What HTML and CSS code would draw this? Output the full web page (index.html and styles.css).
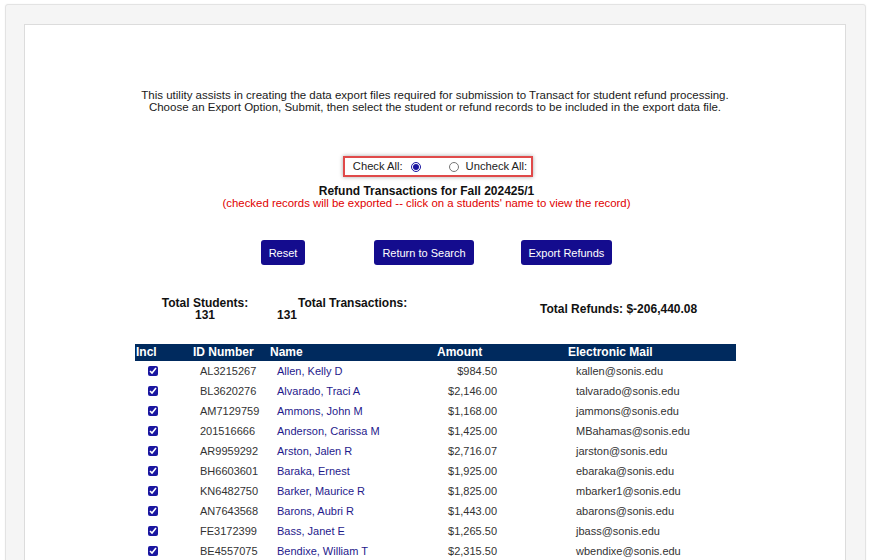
FILE: index.html
```html
<!DOCTYPE html>
<html>
<head>
<meta charset="utf-8">
<link rel="stylesheet" href="styles.css">
</head>
<body>
<div class="outer">
  <div class="inner">
    <p class="intro">This utility assists in creating the data export files required for submission to Transact for student refund processing.<br>Choose an Export Option, Submit, then select the student or refund records to be included in the export data file.</p>

    <div class="checkwrap">
      <div class="checkbox-panel">
        <label class="lbl">Check All:</label>
        <input type="radio" name="chk" class="radio r1" checked>
        <input type="radio" name="chk" class="radio r2">
        <label class="lbl lbl2">Uncheck All:</label>
      </div>
    </div>

    <div class="heading">
      <div class="title">Refund Transactions for Fall 202425/1</div>
      <div class="subtitle">(checked records will be exported -- click on a students' name to view the record)</div>
    </div>

    <div class="buttons">
      <button class="btn b-reset">Reset</button>
      <button class="btn b-return">Return to Search</button>
      <button class="btn b-export">Export Refunds</button>
    </div>

    <div class="totals">
      <div class="t1">Total Students:<br>131</div>
      <div class="t2"><span class="t2lbl">Total Transactions:</span><br>131</div>
      <div class="t3">Total Refunds: $-206,440.08</div>
    </div>

    <table class="grid">
      <colgroup>
        <col class="c-incl"><col class="c-id"><col class="c-name"><col class="c-amt"><col class="c-mail">
      </colgroup>
      <thead>
        <tr><th class="h-incl">Incl</th><th class="h-id">ID Number</th><th class="h-name">Name</th><th class="h-amt">Amount</th><th class="h-mail">Electronic Mail</th></tr>
      </thead>
      <tbody>
        <tr><td class="d-incl"><input type="checkbox" class="cb" checked></td><td class="d-id">AL3215267</td><td class="d-name"><a href="#">Allen, Kelly D</a></td><td class="d-amt">$984.50</td><td class="d-mail">kallen@sonis.edu</td></tr>
        <tr><td class="d-incl"><input type="checkbox" class="cb" checked></td><td class="d-id">BL3620276</td><td class="d-name"><a href="#">Alvarado, Traci A</a></td><td class="d-amt">$2,146.00</td><td class="d-mail">talvarado@sonis.edu</td></tr>
        <tr><td class="d-incl"><input type="checkbox" class="cb" checked></td><td class="d-id">AM7129759</td><td class="d-name"><a href="#">Ammons, John M</a></td><td class="d-amt">$1,168.00</td><td class="d-mail">jammons@sonis.edu</td></tr>
        <tr><td class="d-incl"><input type="checkbox" class="cb" checked></td><td class="d-id">201516666</td><td class="d-name"><a href="#">Anderson, Carissa M</a></td><td class="d-amt">$1,425.00</td><td class="d-mail">MBahamas@sonis.edu</td></tr>
        <tr><td class="d-incl"><input type="checkbox" class="cb" checked></td><td class="d-id">AR9959292</td><td class="d-name"><a href="#">Arston, Jalen R</a></td><td class="d-amt">$2,716.07</td><td class="d-mail">jarston@sonis.edu</td></tr>
        <tr><td class="d-incl"><input type="checkbox" class="cb" checked></td><td class="d-id">BH6603601</td><td class="d-name"><a href="#">Baraka, Ernest</a></td><td class="d-amt">$1,925.00</td><td class="d-mail">ebaraka@sonis.edu</td></tr>
        <tr><td class="d-incl"><input type="checkbox" class="cb" checked></td><td class="d-id">KN6482750</td><td class="d-name"><a href="#">Barker, Maurice R</a></td><td class="d-amt">$1,825.00</td><td class="d-mail">mbarker1@sonis.edu</td></tr>
        <tr><td class="d-incl"><input type="checkbox" class="cb" checked></td><td class="d-id">AN7643568</td><td class="d-name"><a href="#">Barons, Aubri R</a></td><td class="d-amt">$1,443.00</td><td class="d-mail">abarons@sonis.edu</td></tr>
        <tr><td class="d-incl"><input type="checkbox" class="cb" checked></td><td class="d-id">FE3172399</td><td class="d-name"><a href="#">Bass, Janet E</a></td><td class="d-amt">$1,265.50</td><td class="d-mail">jbass@sonis.edu</td></tr>
        <tr><td class="d-incl"><input type="checkbox" class="cb" checked></td><td class="d-id">BE4557075</td><td class="d-name"><a href="#">Bendixe, William T</a></td><td class="d-amt">$2,315.50</td><td class="d-mail">wbendixe@sonis.edu</td></tr>
      </tbody>
    </table>
  </div>
</div>
</body>
</html>
```
FILE: styles.css
```css
html, body {
  margin: 0;
  padding: 0;
  background: #ffffff;
  font-family: "Liberation Sans", Arial, sans-serif;
  color: #222;
}

.outer {
  margin: 4px 6px 0 5px;
  border: 1px solid #e3e3e3;
  border-radius: 3px;
  background: #f5f5f5;
  padding: 19px 19px 0 18px;
  box-shadow: 0 0 2px rgba(0,0,0,0.06);
}

.inner {
  border: 1px solid #dcdcdc;
  border-bottom: none;
  background: #ffffff;
  padding: 64px 0 40px 0;
}

.intro {
  margin: 0;
  text-align: center;
  font-size: 11.5px;
  line-height: 12px;
  color: #1a1a1a;
}

.checkwrap {
  margin-top: 43px;
  display: flex;
  justify-content: center;
  padding-left: 6px;
}

.checkbox-panel {
  display: flex;
  align-items: center;
  border: 2px solid #e04a4a;
  padding: 2px 4px 2px 8px;
  box-shadow: 0 0 4px rgba(0,0,0,0.35);
  font-size: 11.2px;
  line-height: 13px;
  color: #222;
}

.radio {
  width: 10px;
  height: 10px;
  margin: 0;
  accent-color: #1a16a0;
}

.r1 { margin-left: 8px; }
.r2 { margin-left: 28px; }
.lbl2 { margin-left: 7px; }

.heading {
  margin-top: 8px;
  padding-right: 17px;
  text-align: center;
}

.title {
  font-size: 12px;
  font-weight: bold;
  line-height: 12px;
  color: #111;
}

.subtitle {
  font-size: 11.4px;
  line-height: 12px;
  color: #e00000;
}

.buttons {
  margin-top: 31px;
  display: flex;
  justify-content: center;
  padding-left: 3px;
}

.btn {
  height: 25px;
  padding: 0 8px;
  border: none;
  border-radius: 3px;
  background: #140c8e;
  color: #ffffff;
  font-family: "Liberation Sans", Arial, sans-serif;
  font-size: 11px;
}

.b-return { margin-left: 69px; }
.b-export { margin-left: 47px; }

.totals {
  margin-top: 32px;
  margin-left: 110px;
  display: flex;
  font-size: 12px;
  font-weight: bold;
  line-height: 12px;
  color: #111;
}

.t1 {
  width: 140px;
  text-align: center;
}

.t2 {
  width: 265px;
  padding-left: 2px;
  box-sizing: border-box;
}

.t2lbl {
  padding-left: 21px;
}

.t3 {
  align-self: center;
}

.grid {
  margin-top: 23px;
  margin-left: 110px;
  width: 601px;
  table-layout: fixed;
  border-collapse: collapse;
  border-spacing: 0;
}

.c-incl { width: 35px; }
.c-id { width: 96px; }
.c-name { width: 164px; }
.c-amt { width: 130px; }
.c-mail { width: 176px; }

.grid th {
  background: #002a5e;
  color: #ffffff;
  font-size: 12px;
  font-weight: bold;
  text-align: left;
  height: 17px;
  line-height: 17px;
  padding: 0;
  white-space: nowrap;
}

.h-incl { padding-left: 1px !important; }
.h-id { padding-left: 23px !important; }
.h-name { padding-left: 4px !important; }
.h-amt { padding-left: 7px !important; }
.h-mail { padding-left: 8px !important; }

.grid td {
  height: 20px;
  padding: 0;
  font-size: 11px;
  line-height: 20px;
  color: #333;
  white-space: nowrap;
}

.d-incl {
  text-align: center;
  vertical-align: middle;
}

.cb {
  width: 10px;
  height: 10px;
  display: block;
  margin: 0 auto;
  accent-color: #1a16a0;
}

.d-id { padding-left: 30px !important; }
.d-name { padding-left: 11px !important; }
.d-name a {
  color: #1f1a8c;
  text-decoration: none;
}
.d-amt {
  text-align: right;
  padding-right: 63px !important;
}
.d-mail { padding-left: 16px !important; }
```
